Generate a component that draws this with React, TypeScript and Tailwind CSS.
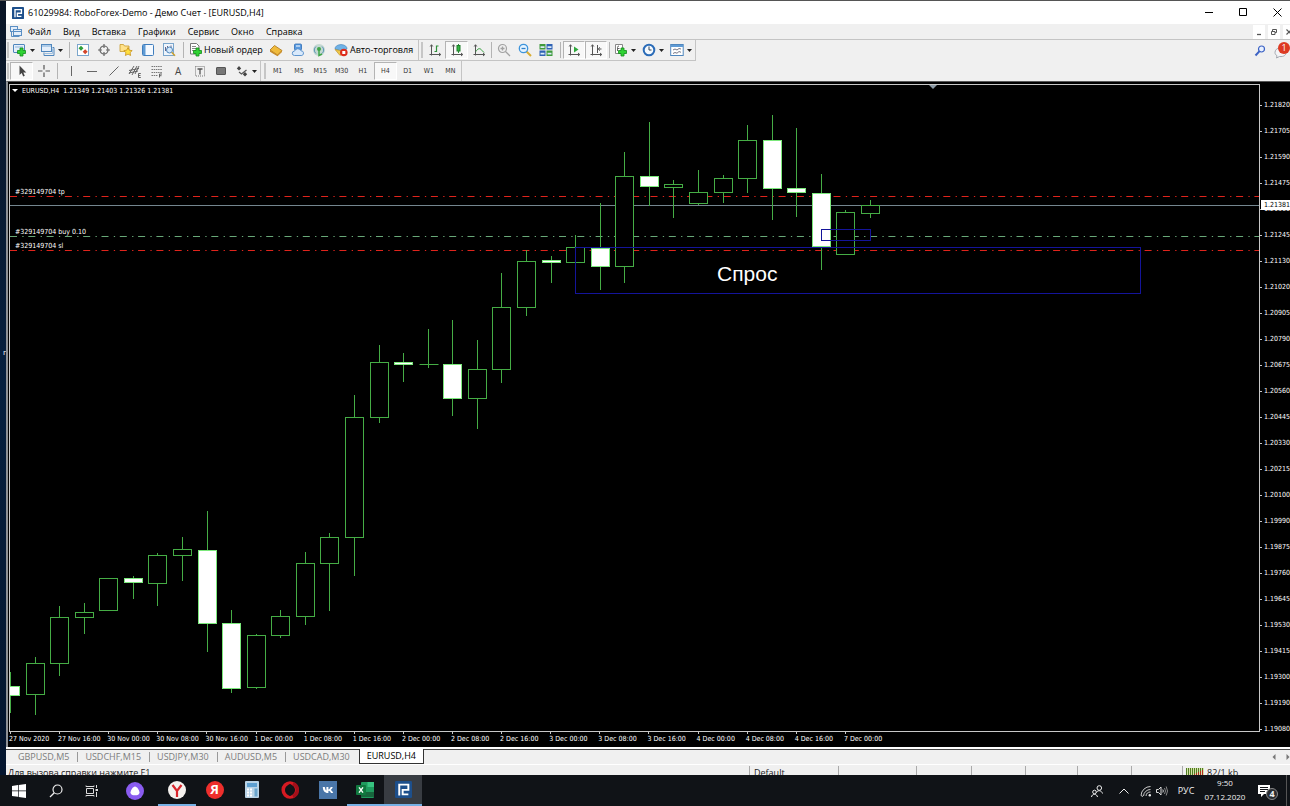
import type { ReactNode } from "react";

type Candle = [high: number, top: number, bottom: number, low: number, filled?: boolean];

const CANDLE_STEP = 24.57;

// y values in plot pixels
const CANDLES: Candle[] = [
  [587, 601, 610, 628, true],
  [572, 578, 609, 630],
  [521, 532, 578, 591],
  [518, 527, 532, 549],
  [493, 493, 525, 525],
  [491, 493, 497, 514, true],
  [468, 470, 498, 521],
  [452, 464, 470, 496],
  [426, 465, 538, 567, true],
  [525, 538, 603, 608, true],
  [549, 550, 602, 604],
  [525, 531, 550, 553],
  [467, 478, 531, 540],
  [448, 452, 478, 526],
  [310, 332, 452, 491],
  [260, 277, 332, 338],
  [268, 277, 279, 297, true],
  [244, 279, 279, 283],
  [235, 279, 313, 331, true],
  [255, 284, 313, 344],
  [188, 222, 284, 298],
  [165, 176, 222, 231],
  [171, 175, 177, 198, true],
  [150, 162, 177, 177],
  [118, 163, 181, 205, true],
  [67, 91, 181, 198],
  [37, 91, 101, 121, true],
  [95, 99, 102, 133],
  [85, 107, 118, 120],
  [90, 93, 107, 118],
  [40, 55, 93, 108],
  [30, 55, 103, 135, true],
  [43, 103, 107, 132, true],
  [89, 108, 161, 185, true],
  [125, 127, 169, 169],
  [115, 120, 128, 133],
];

const PRICES = [
  "1.21820", "1.21705", "1.21590", "1.21475", "1.21360", "1.21245", "1.21130", "1.21020", "1.20905",
  "1.20790", "1.20675", "1.20560", "1.20445", "1.20330", "1.20215", "1.20100", "1.19990", "1.19875",
  "1.19760", "1.19645", "1.19530", "1.19415", "1.19300", "1.19190", "1.19080",
];

const TIMES = [
  "27 Nov 2020", "27 Nov 16:00", "30 Nov 00:00", "30 Nov 08:00", "30 Nov 16:00", "1 Dec 00:00",
  "1 Dec 08:00", "1 Dec 16:00", "2 Dec 00:00", "2 Dec 08:00", "2 Dec 16:00", "3 Dec 00:00",
  "3 Dec 08:00", "3 Dec 16:00", "4 Dec 00:00", "4 Dec 08:00", "4 Dec 16:00", "7 Dec 00:00",
];

const MENU = ["Файл", "Вид", "Вставка", "Графики", "Сервис", "Окно", "Справка"];
const PERIODS = ["M1", "M5", "M15", "M30", "H1", "H4", "D1", "W1", "MN"];
const TABS = ["GBPUSD,M5", "USDCHF,M15", "USDJPY,M30", "AUDUSD,M5", "USDCAD,M30"];
const ACTIVE_TAB = "EURUSD,H4";

function Icon({ children }: { children: ReactNode }) {
  return (
    <svg viewBox="0 0 14 14" className="size-3.5 shrink-0" fill="none" aria-hidden="true">
      {children}
    </svg>
  );
}

function Plus({ x = 7, y = 7 }: { x?: number; y?: number }) {
  return (
    <path
      d={`M${x + 2} ${y}h3v2.500h2.500v3h-2.500v2.500h-3v-2.500h-2.500v-3h2.500z`}
      fill="#2fd233"
      stroke="#128a1b"
      strokeWidth=".8"
    />
  );
}

function RoboLogo({ className }: { className: string }) {
  return (
    <svg viewBox="0 0 14 14" className={className} aria-hidden="true">
      <rect width="14" height="14" rx="1" fill="#1d4f8b" />
      <path d="M3.5 12V3H11v4.3H6.3V11H11" fill="none" stroke="#fff" strokeWidth="1.6" />
    </svg>
  );
}

const axes = <path d="M3.5 2v10.500M1.500 11.500h11M2.200 3.500l1.300-1.800 1.300 1.800M11 10l1.800 1.500L11 13" stroke="#555" />;

const icons = {
  newChart: (
    <Icon>
      <rect x=".5" y="1.5" width="11" height="8" rx=".5" fill="#e4eefa" stroke="#4f86bd" />
      <path d="M2 4h8" stroke="#8fb5da" />
      <Plus x={5} y={5} />
    </Icon>
  ),
  profiles: (
    <Icon>
      <rect x=".5" y="1.5" width="10" height="7" fill="#e4eefa" stroke="#4f86bd" />
      <path d="M1 3h9" stroke="#7aaad6" />
      <path d="M11.5 4.5H13v8H3v-3" stroke="#4f86bd" />
      <path d="M4 10.5h7.500v-5" stroke="#9dbfe0" />
    </Icon>
  ),
  market: (
    <Icon>
      <rect x="1.5" y="1.5" width="11" height="11" fill="#fff" stroke="#7ba6cc" />
      <path d="M5 2.800l2.500 2.500L5 7.800 2.500 5.300z" fill="#2f9e3a" />
      <path d="M9.200 6.300l2.500 2.500-2.500 2.500-2.500-2.500z" fill="#d4472b" />
    </Icon>
  ),
  target: (
    <Icon>
      <circle cx="7" cy="7" r="4" stroke="#666" strokeWidth="1.2" />
      <path d="M7 1v4M7 9v4M1 7h4M9 7h4" stroke="#666" strokeWidth="1.2" />
    </Icon>
  ),
  navigator: (
    <Icon>
      <path d="M1 3V1.500h3.500l1 1.500H10v5.500H1z" fill="#ffe28a" stroke="#c89a2b" strokeWidth=".8" />
      <path d="M9 4.500l1.300 2.700 2.900.4-2.100 2 .5 2.900L9 11.100l-2.600 1.400.5-2.900-2.100-2 2.900-.4z" fill="#ffdf3d" stroke="#c7901a" strokeWidth=".8" />
    </Icon>
  ),
  terminal: (
    <Icon>
      <rect x="1.5" y="1.5" width="11" height="11" rx="1" fill="#f4f9ff" stroke="#3f7dbd" />
      <rect x="2" y="2" width="2.5" height="10" fill="#5f9bd5" />
    </Icon>
  ),
  tester: (
    <Icon>
      <rect x="1.5" y=".5" width="10" height="12" fill="#eef5fc" stroke="#7ba6cc" />
      <path d="M3.500 8V4M5.500 6V3M9 5V2.500" stroke="#668" />
      <circle cx="7.5" cy="7" r="3" fill="#d5e9fa" stroke="#4f86bd" />
      <path d="M9.700 9.300l3.300 3.500" stroke="#caa030" strokeWidth="1.5" />
    </Icon>
  ),
  order: (
    <Icon>
      <path d="M1.500.5h6L10 3v8H1.500z" fill="#fff" stroke="#777" />
      <path d="M3 3.500h4M3 5.500h5M3 7.500h4" stroke="#888" />
      <Plus x={5} y={5} />
    </Icon>
  ),
  book: (
    <Icon>
      <path d="M1 7l4.500-4.500L13 7.500 8.500 12z" fill="#f0bb3c" stroke="#a8741b" strokeWidth=".8" />
      <path d="M1 7v1.800l7.500 4.500L13 9V7.500L8.500 12z" fill="#c98a22" />
    </Icon>
  ),
  cloud: (
    <Icon>
      <rect x="3.5" y="1" width="7" height="6" rx="1" fill="#5b9be0" stroke="#2f6db5" strokeWidth=".8" />
      <path d="M5 3h4" stroke="#fff" />
      <path d="M3.500 12.500a2.200 2.200 0 010-4.400 3.500 3.500 0 016.500-.3 2.400 2.400 0 01.8 4.700z" fill="#d9e9fb" stroke="#4f8ac8" strokeWidth=".9" />
    </Icon>
  ),
  signals: (
    <Icon>
      <circle cx="7" cy="7" r="6" fill="#c3d8d2" />
      <path d="M4 10.500a4.500 4.500 0 010-7M10 3.500a4.500 4.500 0 010 7" stroke="#5f97b8" />
      <circle cx="7" cy="6" r="2" fill="#3fa548" />
      <path d="M7 6v6.500l3-1.500" stroke="#3fa548" strokeWidth="1.5" />
    </Icon>
  ),
  auto: (
    <Icon>
      <path d="M1 6q0-4 6-4.500Q13 2 13 6l-6 2z" fill="#6fb2e6" stroke="#3c7db8" strokeWidth=".6" />
      <path d="M1 6.500l5 6 4-3-3.500-2z" fill="#f0c849" stroke="#b58a22" strokeWidth=".6" />
      <circle cx="9.8" cy="9.5" r="3.8" fill="#dd2b1c" />
      <rect x="8.3" y="8" width="3" height="3" fill="#fff" />
    </Icon>
  ),
  bars: (
    <Icon>
      {axes}
      <path d="M8.500 2.500v6.500M8.500 3h2M6.500 8.500h2" stroke="#2f8f3a" strokeWidth="1.2" />
    </Icon>
  ),
  candles: (
    <Icon>
      {axes}
      <path d="M8.500 1v9" stroke="#2f8f3a" />
      <rect x="7" y="2.5" width="3" height="5.5" fill="#35b643" stroke="#1e7d2a" />
    </Icon>
  ),
  line: (
    <Icon>
      {axes}
      <path d="M4 8.500c1.500-3 4-4 6-1l2 2" stroke="#2f9e3a" />
    </Icon>
  ),
  zoomIn: (
    <Icon>
      <circle cx="5.5" cy="5.5" r="4" stroke="#a2a2a2" strokeWidth="1.2" />
      <path d="M3.500 5.500h4M5.500 3.500v4M8.500 8.500L13 13" stroke="#a2a2a2" strokeWidth="1.3" />
    </Icon>
  ),
  zoomOut: (
    <Icon>
      <path d="M8.500 8.500L13 13" stroke="#d9ad33" strokeWidth="2" />
      <circle cx="5.5" cy="5.5" r="4.200" fill="#e6f4ff" stroke="#3d94dc" strokeWidth="1.3" />
      <path d="M3.500 5.500h4" stroke="#2f80c8" strokeWidth="1.3" />
    </Icon>
  ),
  tile: (
    <Icon>
      <rect x=".5" y="1" width="6" height="5.5" fill="#3f9a3c" />
      <rect x="7.5" y="1" width="6" height="5.5" fill="#2f62b5" />
      <rect x=".5" y="7.5" width="6" height="5.5" fill="#2f62b5" />
      <rect x="7.5" y="7.5" width="6" height="5.5" fill="#3f9a3c" />
      <path d="M1.500 4.200h4M8.500 4.200h4M1.500 10.700h4M8.500 10.700h4" stroke="#dcecf8" strokeWidth="1.8" />
    </Icon>
  ),
  scroll: (
    <Icon>
      {axes}
      <path d="M7 3.500l4.500 3L7 9.500z" fill="#2fa83c" />
    </Icon>
  ),
  shift: (
    <Icon>
      {axes}
      <path d="M8.500 2v8M12.500 6h-3M11 4.300L9.200 6 11 7.700" stroke="#555" />
    </Icon>
  ),
  indicators: (
    <Icon>
      <path d="M1.500 1.500h7v9h-7z" fill="#fff" stroke="#888" />
      <path d="M3.500 8V4.500Q3.500 3 5 3M3 5.500h2.500" stroke="#666" />
      <Plus x={5} y={5} />
    </Icon>
  ),
  clock: (
    <Icon>
      <circle cx="7" cy="7" r="5.3" fill="#f5faff" stroke="#2b6cb8" strokeWidth="2" />
      <path d="M7 3.500V7h2.500" stroke="#345" />
    </Icon>
  ),
  template: (
    <Icon>
      <rect x=".7" y="1.5" width="12.500" height="11" fill="#fff" stroke="#4f86bd" />
      <path d="M1 3h12" stroke="#5f9bd5" strokeWidth="2" />
      <path d="M3 7l2-1 2 1 2-1.500 2 .5M3 10.500l2-1 2 .7 2-1.700 2 .8" stroke="#667" strokeWidth=".9" />
    </Icon>
  ),
  cursor: (
    <Icon>
      <path d="M4.500 1.500V11l2.200-2 1.500 3.500 1.600-.7-1.500-3.300h3z" fill="#444" />
    </Icon>
  ),
  cross: (
    <Icon>
      <path d="M7 1v4.500M7 8.500V13M1 7h4.500M8.500 7H13" stroke="#555" strokeWidth="1.2" />
    </Icon>
  ),
  vline: <Icon><path d="M7.500 2v10" stroke="#666" /></Icon>,
  hline: <Icon><path d="M2 7.500h10" stroke="#666" /></Icon>,
  trend: <Icon><path d="M2.500 11.500l9-9" stroke="#666" /></Icon>,
  channel: (
    <Icon>
      <path d="M1 10l5-8M4 11l5-9M7 10l4-8M1 6.500l10-2M1 9l9-2" stroke="#555" strokeWidth=".9" />
      <path d="M12.800 9.500h-2.300v4h2.300M10.500 11.500h2" stroke="#555" strokeWidth=".9" />
    </Icon>
  ),
  fibo: (
    <Icon>
      <path d="M1.500 2.500h11M1.500 5.500h11M1.500 8.500h11M1.500 11.500h6" stroke="#777" strokeDasharray="1.500 .7" />
      <path d="M9.500 13.500V10H12M9.500 11.700h2" stroke="#555" strokeWidth=".9" />
    </Icon>
  ),
  label: (
    <Icon>
      <rect x="2.5" y="2.5" width="9" height="9.5" stroke="#777" strokeDasharray="1 1" />
      <path d="M4.500 5h5M7 5v5.500" stroke="#555" strokeWidth="1.3" />
    </Icon>
  ),
  rect: <Icon><rect x="2.5" y="3.5" width="9" height="7" rx=".5" fill="#777" stroke="#555" /></Icon>,
  shapes: (
    <Icon>
      <path d="M4 2l2.200 2.500L4 6.500 1.800 4.500z" fill="#444" />
      <path d="M4 8l2.500 2 5-4" stroke="#555" strokeWidth="1.2" />
      <path d="M10 8l2.200 2.300L10 12.500l-2.200-2.200z" fill="#444" />
    </Icon>
  ),
};

type ToolProps = { label: string; icon: ReactNode; pressed?: boolean };

function Tool({ label, icon, pressed }: ToolProps) {
  return (
    <button
      type="button"
      aria-label={label}
      className={`flex h-[18px] flex-1 items-center justify-center ${
        pressed ? "border border-[#b4b4b4] border-r-white border-b-white bg-[#f8f8f8]" : ""
      }`}
    >
      {icon}
    </button>
  );
}

function DropTool({ label, icon }: ToolProps) {
  return (
    <button type="button" aria-label={label} className="flex h-[18px] w-7 items-center gap-[3px] pl-[3px]">
      {icon}
      <svg viewBox="0 0 5 3" className="h-[3px] w-[5px]" aria-hidden="true">
        <path d="M0 0h5L2.5 3z" fill="#222" />
      </svg>
    </button>
  );
}

function Separator({ className }: { className: string }) {
  return (
    <div className={`flex shrink-0 justify-center ${className}`}>
      <div className="h-4 w-px bg-[#b4b4b4]" />
    </div>
  );
}

function Grip({ className }: { className: string }) {
  return (
    <div className={`flex shrink-0 justify-end pr-px ${className}`}>
      <div className="h-4 w-[2px] bg-[#c6c6c6]" />
    </div>
  );
}

function TitleBar() {
  return (
    <header className="flex h-[23px] shrink-0 items-center bg-white pl-[6px]">
      <RoboLogo className="size-3" />
      <h1 className="ml-1 flex-1 text-[9px] whitespace-nowrap text-black">
        61029984: RoboForex-Demo - Демо Счет - [EURUSD,H4]
      </h1>
      <div className="-mr-1 flex text-black">
        <button type="button" aria-label="Свернуть" className="flex h-[23px] w-[34px] items-center justify-center">
          <svg viewBox="0 0 9 9" className="size-[9px]" stroke="currentColor"><path d="M0 4.500h8" /></svg>
        </button>
        <button type="button" aria-label="Развернуть" className="flex h-[23px] w-[34px] items-center justify-center">
          <svg viewBox="0 0 9 9" className="size-[9px]" stroke="currentColor" fill="none"><path d="M.5.5h7v7h-7z" /></svg>
        </button>
        <button type="button" aria-label="Закрыть" className="flex h-[23px] w-[34px] items-center justify-center">
          <svg viewBox="0 0 9 9" className="size-[9px]" stroke="currentColor"><path d="M.5.5l8 8M8.500.5l-8 8" /></svg>
        </button>
      </div>
    </header>
  );
}

function MenuBar() {
  return (
    <nav className="flex h-4 shrink-0 items-center border-b border-[#c4c4c4] pl-1">
      <svg viewBox="0 0 12 12" className="mr-[6px] size-3" fill="#e4eefa" stroke="#5b8fc4" aria-hidden="true">
        <rect x=".5" y=".5" width="7" height="5" />
        <rect x="3.5" y="3.5" width="8" height="6" />
        <path d="M3.500 5.500h8M1.500 6v4.500h8" fill="none" />
      </svg>
      <div className="flex flex-1 gap-3">
        {MENU.map((item) => (
          <button key={item} type="button" className="text-[9px] leading-[14px] text-black">
            {item}
          </button>
        ))}
      </div>
      <div className="-mr-[5px] flex gap-[3px] text-[#555]">
        <button type="button" aria-label="Свернуть окно" className="flex h-[14px] w-3 items-center justify-center bg-white">
          <svg viewBox="0 0 8 8" className="size-2" stroke="currentColor"><path d="M2 6.500h4" strokeWidth="1.3" /></svg>
        </button>
        <button type="button" aria-label="Восстановить окно" className="flex h-[14px] w-3 items-center justify-center bg-white">
          <svg viewBox="0 0 8 8" className="size-2" stroke="currentColor" fill="none">
            <path d="M2.500 3V1.500h4v3H5M1.500 3.500H5v3H1.500z" />
          </svg>
        </button>
        <button type="button" aria-label="Закрыть окно" className="flex h-[14px] w-3 items-center justify-center bg-white">
          <svg viewBox="0 0 8 8" className="size-2" stroke="currentColor"><path d="M1.500 1.500l5 5M6.500 1.500l-5 5" strokeWidth="1.2" /></svg>
        </button>
      </div>
    </nav>
  );
}

function MainToolbar() {
  return (
    <div className="flex h-[21px] shrink-0 items-center">
      <div className="flex h-[21px] items-center border-r border-b border-[#c4c4c4] pr-[2px]">
        <Grip className="w-1" />
        <DropTool label="Новый график" icon={icons.newChart} />
        <DropTool label="Профили" icon={icons.profiles} />
        <Separator className="w-[6px]" />
        <div className="flex w-[108px]">
          <Tool label="Обзор рынка" icon={icons.market} />
          <Tool label="Окно данных" icon={icons.target} />
          <Tool label="Навигатор" icon={icons.navigator} />
          <Tool label="Терминал" icon={icons.terminal} />
          <Tool label="Тестер стратегий" icon={icons.tester} />
        </div>
        <Separator className="w-[6px]" />
        <button type="button" className="flex w-[79px] items-center gap-px pl-[3px] text-[9px] whitespace-nowrap text-black">
          {icons.order}
          Новый ордер
        </button>
        <div className="flex w-[65px]">
          <Tool label="MetaEditor" icon={icons.book} />
          <Tool label="Хостинг" icon={icons.cloud} />
          <Tool label="Сигналы" icon={icons.signals} />
        </div>
        <button type="button" className="flex w-[86px] items-center gap-[2px] pl-1 text-[9px] whitespace-nowrap text-black">
          {icons.auto}
          Авто-торговля
        </button>
      </div>
      <div className="flex h-[21px] items-center border-r border-b border-[#c4c4c4]">
        <Grip className="w-[5px]" />
        <div className="flex w-[65px]">
          <Tool label="Бары" icon={icons.bars} />
          <Tool label="Свечи" icon={icons.candles} pressed />
          <Tool label="Линия" icon={icons.line} />
        </div>
        <Separator className="w-[4px]" />
        <div className="flex w-[64px]">
          <Tool label="Увеличить" icon={icons.zoomIn} />
          <Tool label="Уменьшить" icon={icons.zoomOut} />
          <Tool label="Окна рядом" icon={icons.tile} />
        </div>
        <Separator className="w-[6px]" />
        <div className="flex w-[44px]">
          <Tool label="Автопрокрутка" icon={icons.scroll} pressed />
          <Tool label="Сдвиг графика" icon={icons.shift} pressed />
        </div>
        <Separator className="w-[4px]" />
        <DropTool label="Индикаторы" icon={icons.indicators} />
        <DropTool label="Периоды" icon={icons.clock} />
        <DropTool label="Шаблоны" icon={icons.template} />
      </div>
      <div className="ml-auto flex items-center gap-2">
        <button type="button" aria-label="Поиск">
          <svg viewBox="0 0 12 12" className="size-3" fill="none" aria-hidden="true">
            <circle cx="7.5" cy="4" r="3" fill="#e8f1ff" stroke="#3c62c4" strokeWidth="1.2" />
            <path d="M5.300 6.300L1.500 10.500" stroke="#3c62c4" strokeWidth="2" />
          </svg>
        </button>
        <button type="button" aria-label="Уведомления: 1" className="relative size-4">
          <svg viewBox="0 0 16 16" className="size-4" aria-hidden="true">
            <path d="M6 5c-3 0-5 2-5 4.500 0 1.500.8 2.500 2 3.200L2.500 15l3-1.500C10 14 12 12 12 9.500z" fill="#f4f4f6" stroke="#a4a8b0" />
          </svg>
          <span className="absolute -top-px left-1 flex size-3 items-center justify-center rounded-full bg-[#dd3a22] text-[9px] text-white">
            1
          </span>
        </button>
      </div>
    </div>
  );
}

function DrawingToolbar() {
  return (
    <div className="flex h-5 shrink-0">
      <div className="flex items-center border-r border-[#c4c4c4]">
        <Grip className="w-1" />
        <div className="flex w-[44px]">
          <Tool label="Курсор" icon={icons.cursor} pressed />
          <Tool label="Перекрестие" icon={icons.cross} />
        </div>
        <Separator className="w-[6px]" />
        <div className="flex w-[172px]">
          <Tool label="Вертикальная линия" icon={icons.vline} />
          <Tool label="Горизонтальная линия" icon={icons.hline} />
          <Tool label="Трендовая линия" icon={icons.trend} />
          <Tool label="Канал" icon={icons.channel} />
          <Tool label="Фибоначчи" icon={icons.fibo} />
          <Tool label="Текст" icon={<span className="text-[10px] text-[#444]">A</span>} />
          <Tool label="Метка" icon={icons.label} />
          <Tool label="Прямоугольник" icon={icons.rect} />
        </div>
        <DropTool label="Стрелки" icon={icons.shapes} />
      </div>
      <div className="flex items-center border-r border-[#c4c4c4]">
        <Grip className="w-[6px]" />
        <div className="flex w-[194px]">
          {PERIODS.map((period) => (
            <button
              key={period}
              type="button"
              className={`h-[18px] flex-1 font-['DejaVu_Sans_Condensed','DejaVu_Sans',sans-serif] text-[7px] text-[#333] ${
                period === "H4" ? "border border-[#b4b4b4] border-r-white border-b-white bg-[#f8f8f8]" : ""
              }`}
            >
              {period}
            </button>
          ))}
        </div>
      </div>
    </div>
  );
}

function OrderLine({ y, color, label }: { y: number; color: string; label: string }) {
  return (
    <>
      <path
        d={`M0 ${y + 0.5}H4000`}
        stroke={color}
        strokeDasharray="7 5.3 1.3 4.7"
      />
      <text x="5" y={y - 2} fill="#fff">{label}</text>
    </>
  );
}

function Plot() {
  return (
    <svg className="min-h-0 w-full flex-1 text-[7px]" role="img" aria-label="EURUSD,H4">
      <OrderLine y={111} color="#e0241c" label="#329149704 tp" />
      <OrderLine y={151} color="#68a878" label="#329149704 buy 0.10" />
      <OrderLine y={165} color="#e0241c" label="#329149704 sl" />
      <line x1="0" x2="100%" y1="120.500" y2="120.500" stroke="#74868f" />

      <g stroke="#45ad45">
        {CANDLES.map(([high, top, bottom, low, filled], i) => {
          const x = Math.round(i * CANDLE_STEP) + 0.5;
          return (
            <g key={i}>
              <line x1={x} x2={x} y1={high} y2={low} />
              {top === bottom ? (
                <line x1={x - 9} x2={x + 10} y1={top + 0.5} y2={top + 0.5} />
              ) : (
                <rect
                  x={x - 9}
                  y={top + 0.5}
                  width="18"
                  height={bottom - top}
                  fill={filled ? "#fff" : "#000"}
                  stroke={filled ? "#7be87b" : "#45ad45"}
                />
              )}
            </g>
          );
        })}
      </g>

      <g fill="none" stroke="#14149a">
        <rect x="565.500" y="162.500" width="565" height="46" />
        <rect x="811.500" y="144.500" width="49" height="11" />
      </g>

      <path d="M919 0h8l-4 4z" fill="#8c9aa6" />
      <path d="M2 4h6L5 7z" fill="#fff" />
      <text x="12" y="8" fill="#fff" xmlSpace="preserve">
        {"EURUSD,H4  1.21349 1.21403 1.21326 1.21381"}
      </text>
      <text x="707" y="196" fill="#fff" className="font-['Liberation_Sans',Arial,sans-serif] text-[21px]">
        Спрос
      </text>
    </svg>
  );
}

function Chart() {
  return (
    <section className="flex min-h-0 flex-1 border-t border-l-2 border-t-[#555] border-l-[#8e9196] bg-black pl-px font-['DejaVu_Sans_Condensed','DejaVu_Sans',sans-serif] text-[7px] leading-[11px] text-white">
      <div className="flex min-w-0 flex-1 flex-col pt-[2px]">
        <div className="flex min-h-0 flex-1 flex-col border border-[#c8c8c8]">
          <Plot />
        </div>
        <div className="grid h-[15px] w-[884px] grid-cols-18">
          {TIMES.map((time) => (
            <div key={time} className="flex flex-col whitespace-nowrap">
              <span className="ml-px h-[2px] w-px bg-[#c8c8c8]" />
              <span>{time}</span>
            </div>
          ))}
        </div>
      </div>
      <div className="relative flex w-[30px] flex-col justify-between overflow-hidden pt-[18px] pb-3">
        {PRICES.map((price) => (
          <div key={price} className="flex items-center gap-[2px]">
            <span className="h-px w-[2px] shrink-0 bg-[#c8c8c8]" />
            <span>{price}</span>
          </div>
        ))}
        <span className="absolute top-[118px] left-px h-[10px] w-[29px] bg-white pl-[3px] leading-[10px] text-black">
          1.21381
        </span>
      </div>
    </section>
  );
}

function ChartTabs() {
  return (
    <div className="flex h-[17px] shrink-0 border-t-2 border-white">
      <div className="flex flex-1 border-t border-[#444] pl-[5px] text-[9px] leading-[14px]">
        {TABS.map((tab, i) => (
          <button key={tab} type="button" className="flex items-center pl-[7px] text-[#7c7c7c]">
            {tab}
            <span className={`ml-2 h-[10px] w-px ${i < TABS.length - 1 ? "bg-[#999]" : ""}`} />
          </button>
        ))}
        <button type="button" className="-mt-px h-[15px] border border-t-0 border-[#333] bg-white px-[7px] text-black">
          {ACTIVE_TAB}
        </button>
        <div className="ml-auto flex items-center gap-[10px] text-[#777]">
          <button type="button" aria-label="Вкладки влево">
            <svg viewBox="0 0 4 6" className="h-[6px] w-1" fill="currentColor"><path d="M3.500 0v6L.5 3z" /></svg>
          </button>
          <button type="button" aria-label="Вкладки вправо">
            <svg viewBox="0 0 4 6" className="h-[6px] w-1" fill="currentColor"><path d="M.5 0v6l3-3z" /></svg>
          </button>
        </div>
      </div>
    </div>
  );
}

function StatusBar() {
  const cell = "border-l border-[#aaa] mt-px";
  return (
    <footer className="flex h-[11px] shrink-0 overflow-hidden border-t border-white text-[9px] leading-[14px] whitespace-nowrap text-[#222]">
      <span className="mt-px flex-1 pl-[2px]">Для вызова справки нажмите F1</span>
      <span className={`${cell} w-[89px] pl-1`}>Default</span>
      <span className={`${cell} w-[78px]`} />
      <span className={`${cell} w-[55px]`} />
      <span className={`${cell} w-[54px]`} />
      <span className={`${cell} w-[52px]`} />
      <span className={`${cell} w-[54px]`} />
      <span className={`${cell} w-[51px]`} />
      <span className={`${cell} flex w-[108px] gap-[3px] pl-[3px]`}>
        <svg viewBox="0 0 18 10" className="mt-[2px] h-[10px] w-[18px] shrink-0" aria-hidden="true">
          <path d="M0 0h18v10H0z" fill="#d5e0a8" />
          <path d="M.5 0v10M2.500 0v10M4.500 0v10M6.500 0v10M8.500 0v10M10.500 0v10M12.500 0v10M14.500 0v10M16.500 0v10" stroke="#4e7d20" />
          <path d="M8.500 10V6M10.500 10V5M12.500 10V4M14.500 10V3M16.500 10V2" stroke="#b02a1e" />
        </svg>
        82/1 kb
      </span>
    </footer>
  );
}

type AppButtonProps = { label: string; children: ReactNode; running?: boolean; active?: boolean };

function AppButton({ label, children, running, active }: AppButtonProps) {
  return (
    <button
      type="button"
      aria-label={label}
      className={`flex h-[31px] items-center justify-center border-b-2 px-px ${
        running ? "border-[#76b0e4]" : "border-transparent"
      } ${active ? "bg-[#383c42]" : ""}`}
    >
      {children}
    </button>
  );
}

function Taskbar() {
  return (
    <div className="flex h-[31px] shrink-0 items-center bg-[#101317] text-[#f0f0f0]">
      <button type="button" aria-label="Пуск" className="flex w-[37px] justify-center">
        <svg viewBox="0 0 14 14" className="size-[14px]" fill="#fff">
          <path d="M0 2l6-.9v5.500H0zM6.700 1L14 0v6.600H6.700zM0 7.300h6v5.500L0 12zM6.700 7.300H14V14l-7.300-1z" />
        </svg>
      </button>
      <button type="button" aria-label="Поиск" className="flex w-[38px] justify-center">
        <svg viewBox="0 0 14 14" className="size-[14px]" fill="none" stroke="#eee">
          <circle cx="8.5" cy="5.5" r="4.500" strokeWidth="1.2" />
          <path d="M5.300 8.700L1 13" strokeWidth="1.3" />
        </svg>
      </button>
      <button type="button" aria-label="Представление задач" className="flex w-[34px] justify-center">
        <svg viewBox="0 0 14 14" className="size-[14px]" fill="none" stroke="#ddd">
          <path d="M1.500 4.500h7v5h-7zM1 1.500v1h8v-1M1 12.500v-1h8v1M11.500 1v3M11.500 8v5" />
          <path d="M10.500 5H13v2h-2.500z" fill="#ddd" stroke="none" />
        </svg>
      </button>
      <button type="button" aria-label="Алиса" className="flex w-[49px] justify-center pl-[3px]">
        <svg viewBox="0 0 18 18" className="size-[18px]">
          <circle cx="9" cy="9" r="9" fill="#8a5cf0" />
          <path d="M9 4.500c2 0 4.500 4 4.500 6s-2 2.800-4.500 2.800-4.500-.8-4.500-2.800 2.500-6 4.500-6z" fill="#fff" />
        </svg>
      </button>
      <div className="grid w-[264px] grid-cols-7">
        <AppButton label="Яндекс.Браузер" running>
          <svg viewBox="0 0 18 18" className="size-[18px]">
            <circle cx="9" cy="9" r="9" fill="#f4f1ee" />
            <path d="M4.500 4L9 10l4.500-6M9 9.500V16" fill="none" stroke="#d8262c" strokeWidth="2.2" />
          </svg>
        </AppButton>
        <AppButton label="Яндекс">
          <span className="flex size-[18px] items-center justify-center rounded-full bg-[#ee2f2c] text-[13px] font-bold text-white">Я</span>
        </AppButton>
        <AppButton label="Калькулятор">
          <svg viewBox="0 0 14 17" className="h-[17px] w-[14px]">
            <rect width="14" height="17" rx="1" fill="#b9d3e6" />
            <rect x="2" y="2" width="10" height="4" fill="#5d9fd0" />
            <path d="M2 8.500h6M2 11.500h6M2 14.500h6" stroke="#fff" strokeWidth="2" strokeDasharray="2 1" />
            <path d="M9.500 7.500h3v8h-3z" fill="#6aa5cc" />
          </svg>
        </AppButton>
        <AppButton label="Opera">
          <svg viewBox="0 0 18 18" className="size-[18px]">
            <ellipse cx="9" cy="9" rx="6.8" ry="7" fill="none" stroke="#d61a22" strokeWidth="3.5" />
            <path d="M12 2.500a7 7 0 010 13" fill="none" stroke="#a3101a" strokeWidth="3.5" />
            <ellipse cx="9" cy="9" rx="3.300" ry="6" fill="#101317" />
          </svg>
        </AppButton>
        <AppButton label="ВКонтакте">
          <svg viewBox="0 0 18 18" className="size-[18px]">
            <rect width="18" height="18" fill="#4a76a8" />
            <path d="M3.800 6h2c.3 2 1 3.200 1.600 3.600V6h2v2.500c1.100-.2 1.900-1.500 2.300-2.500h2c-.3 1.300-1.200 2.300-1.900 2.900.8.500 1.800 1.300 2.400 3.100H12c-.4-1-1.200-1.900-2.600-2.200V12H9c-3.300 0-5.100-2.200-5.200-6z" fill="#fff" />
          </svg>
        </AppButton>
        <AppButton label="Excel" running>
          <svg viewBox="0 0 18 18" className="size-[18px]">
            <rect x="5" y="1" width="13" height="16" rx="1" fill="#1f9b5e" />
            <path d="M11.500 1H18v5h-6.500z" fill="#38c481" />
            <path d="M5 11h13v5H5z" fill="#17663d" />
            <rect y="4" width="10" height="10" rx="1" fill="#10793f" />
            <path d="M3 6.300l4 5.400M7 6.300l-4 5.400" stroke="#fff" strokeWidth="1.4" />
          </svg>
        </AppButton>
        <AppButton label="RoboForex" running active>
          <RoboLogo className="size-[17px]" />
        </AppButton>
      </div>
      <div className="ml-auto flex h-full items-center text-[9px]">
        <button type="button" aria-label="Люди" className="flex w-[26px] justify-center">
          <svg viewBox="0 0 12 12" className="size-3" fill="none" stroke="#eee">
            <circle cx="8.3" cy="3" r="2.300" />
            <path d="M5.500 7.500c1-2.500 5-2.500 6 1" />
            <circle cx="3.5" cy="7" r="1.8" />
            <path d="M.5 12c.3-3.500 5.500-3.500 6 0" />
          </svg>
        </button>
        <button type="button" aria-label="Скрытые значки" className="flex w-[28px] justify-center">
          <svg viewBox="0 0 10 6" className="h-[6px] w-[10px]" fill="none" stroke="#eee"><path d="M.5 5.500L5 1l4.500 4.500" /></svg>
        </button>
        <button type="button" aria-label="Сеть" className="flex w-4 justify-center">
          <svg viewBox="0 0 12 12" className="size-3" fill="none" stroke="#ccc">
            <path d="M1 10.500a9.500 9.500 0 019.500-9M3.500 11a7 7 0 017-6.500M6 11a4.500 4.500 0 014.500-4M1 10.500l2 1" />
            <circle cx="9.8" cy="10.3" r="1.2" fill="#eee" stroke="none" />
          </svg>
        </button>
        <button type="button" aria-label="Громкость" className="flex w-4 justify-center">
          <svg viewBox="0 0 12 12" className="size-3" fill="none" stroke="#ddd">
            <path d="M.5 4.500h2L5 2v8L2.500 7.500h-2zM6.800 4.500q1 1.500 0 3" />
            <path d="M8.500 3q2 3 0 6M10.200 1.500q2.600 4.500 0 9" stroke="#888" />
          </svg>
        </button>
        <span className="w-8 text-center">РУС</span>
        <time className="flex h-full w-[46px] flex-col items-center justify-center pb-[2px] text-[8px] leading-[14px]">
          <span>9:50</span>
          <span>07.12.2020</span>
        </time>
        <button type="button" aria-label="Центр уведомлений: 4" className="relative ml-[10px] h-[18px] w-[20px]">
          <svg viewBox="0 0 12 12" className="mt-px size-3">
            <path d="M0 0h12v9H6l-3 3V9H0z" fill="#fff" />
            <path d="M2 2.500h8M2 4.500h8M2 6.500h5" stroke="#101317" />
          </svg>
          <span className="absolute right-0 bottom-0 flex size-3 items-center justify-center rounded-full border border-[#888] bg-[#2a2d31] text-[9px] font-bold">
            4
          </span>
        </button>
        <span className="ml-[8px] h-full w-1 border-l border-[#555]" />
      </div>
    </div>
  );
}

export default function App() {
  return (
    <div className="flex h-screen flex-col overflow-hidden border-t border-[#555] bg-[#101317] font-['Open_Sans','Noto_Sans',sans-serif]">
      <div className="flex min-h-0 flex-1">
        <aside className="w-[6px] shrink-0 overflow-hidden bg-linear-to-b from-[#0a1526] via-[#06203f] to-[#04152e] pt-[345px] pl-[3px] text-[8px] leading-3 text-white">
          г
        </aside>
        <main className="flex min-w-0 flex-1 flex-col overflow-hidden bg-[#f0f0f0]">
          <TitleBar />
          <MenuBar />
          <MainToolbar />
          <DrawingToolbar />
          <Chart />
          <ChartTabs />
          <StatusBar />
        </main>
      </div>
      <Taskbar />
    </div>
  );
}
